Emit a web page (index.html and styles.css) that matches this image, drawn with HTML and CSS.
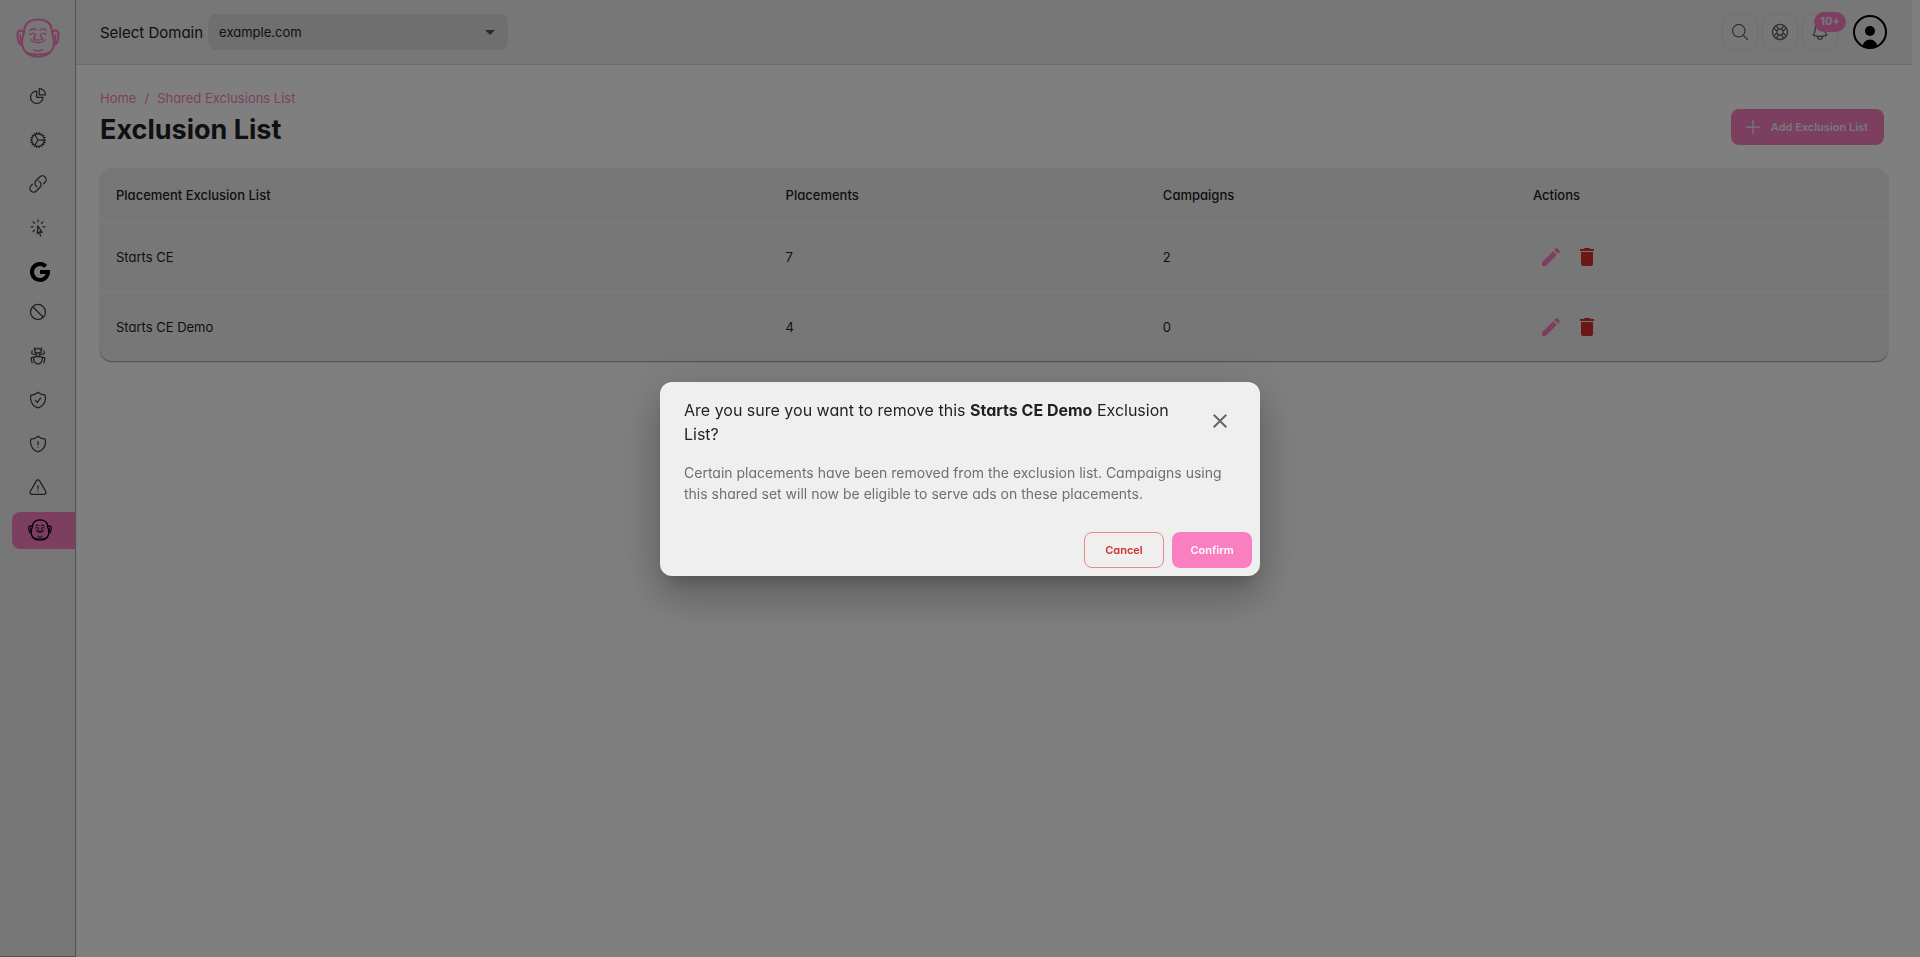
FILE: index.html
```html
<!DOCTYPE html>
<html lang="en">
<head>
<meta charset="utf-8">
<title>Exclusion List</title>
<link rel="stylesheet" href="styles.css">
</head>
<body>
<svg width="0" height="0" class="sprite" aria-hidden="true">
  <symbol id="face" viewBox="0 0 44 40" fill="none" stroke="currentColor" stroke-width="2.2" stroke-linecap="round">
    <path d="M8 14.500C8 6 13 1.500 22 1.500s14 4.500 14 13M6 24c0 9 6 14.500 16 14.500s16-5.500 16-14.500c0-4-1-6-2-9.500M6 24c0-4 1-6 2-9.500"/>
    <path d="M7.500 14C4 10.500 1 13 1.500 18c.5 4 1 8.500 4.500 8.500M36.500 14c3.500-3.500 6.500-1 6 4-.5 4-1 8.500-4.500 8.500"/>
    <path stroke-width="1.500" d="M4.500 16.500c-.8 3 1 4 .300 7M39.500 16.500c.800 3-1 4-.300 7M14 12.500c1-2 4-2.500 6-.5M24 12c2-2 5-1.500 6 .5M14 16.500c1.500-1.500 4-1.500 5.500 0M24.500 16.500c1.500-1.500 4-1.500 5.500 0M19.500 17.500c0 2-2 1.500-2 3s2 1.500 4.500 1.500 4.500 0 4.500-1.500-2-1-2-3M15 21.500c2 4 12 4 14 0M17.500 31.500c2 2 7 2 9 0M10 34c6 3 18 3 24 0"/>
  </symbol>
  <symbol id="pencil" viewBox="0 0 24 24"><path fill="currentColor" d="M3 17.250V21h3.750L17.810 9.940l-3.750-3.750L3 17.250zM20.710 7.040a1 1 0 0 0 0-1.410l-2.340-2.340a1 1 0 0 0-1.410 0l-1.830 1.830 3.750 3.750 1.830-1.830z"/></symbol>
  <symbol id="trash" viewBox="0 0 24 24"><path fill="currentColor" d="M6 19c0 1.100.9 2 2 2h8c1.100 0 2-.9 2-2V7H6v12zM19 4h-3.500l-1-1h-5l-1 1H5v2h14V4z"/></symbol>
</svg>

<div class="app">
  <aside class="sidebar">
    <a class="logo" href="#" aria-label="Home page"><svg class="logo-face"><use href="#face"/></svg></a>
    <nav aria-label="Main">
      <ul class="nav">
        <li><a href="#" aria-label="Dashboard"><svg class="ico" viewBox="0 0 24 24"><path d="M10.500 6a7.500 7.500 0 1 0 7.500 7.500h-7.500V6z"/><path d="M13.500 10.500H21A7.500 7.500 0 0 0 13.500 3v7.500z"/></svg></a></li>
        <li><a href="#" aria-label="Settings"><svg class="ico" viewBox="0 0 24 24"><path d="M4.500 12a7.500 7.500 0 0 0 15 0m-15 0a7.500 7.500 0 1 1 15 0m-15 0H3m16.500 0H21m-1.500 0H12m-8.457 3.077 1.410-.513m14.095-5.130 1.410-.513M5.106 17.785l1.150-.964m11.490-9.642 1.149-.964M7.501 19.795l.750-1.300m7.500-12.990.750-1.300m-6.063 16.658.260-1.477m2.605-14.772.260-1.477m0 17.726-.260-1.477M10.698 4.614l-.260-1.477M16.500 19.794l-.750-1.299M7.500 4.205 12 12m6.894 5.785-1.149-.964M6.256 7.178l-1.150-.964m15.352 8.864-1.410-.513M4.954 9.435l-1.410-.514M12.002 12l-3.750 6.495"/></svg></a></li>
        <li><a href="#" aria-label="Links"><svg class="ico" viewBox="0 0 24 24"><path d="M13.190 8.688a4.500 4.500 0 0 1 1.242 7.244l-4.500 4.500a4.500 4.500 0 0 1-6.364-6.364l1.757-1.757m13.350-.622 1.757-1.757a4.500 4.500 0 0 0-6.364-6.364l-4.500 4.500a4.500 4.500 0 0 0 1.242 7.244"/></svg></a></li>
        <li><a href="#" aria-label="Clicks"><svg class="ico" viewBox="0 0 24 24"><path d="M15.042 21.672 13.684 16.600m0 0-2.510 2.225.569-9.470 5.227 7.917-3.286-.672ZM12 2.250V4.500m5.834.166-1.591 1.591M20.250 10.500H18M7.757 14.743l-1.590 1.590M6 10.500H3.750m4.007-4.243-1.590-1.590"/></svg></a></li>
        <li class="google"><a href="#" aria-label="Google Ads"><svg viewBox="0 0 20 20" fill="none" stroke="#000" stroke-width="4"><path d="M15.700 4.300A8 8 0 1 0 18 10h-8"/></svg></a></li>
        <li><a href="#" aria-label="Blocked"><svg class="ico" viewBox="0 0 24 24"><path d="M18.364 18.364A9 9 0 0 0 5.636 5.636m12.728 12.728A9 9 0 0 1 5.636 5.636m12.728 12.728L5.636 5.636"/></svg></a></li>
        <li><a href="#" aria-label="Bots"><svg class="ico" viewBox="0 0 24 24"><path d="M12 12.750c1.148 0 2.278.080 3.383.237 1.037.146 1.866.966 1.866 2.013 0 3.728-2.350 6.750-5.250 6.750S6.750 18.728 6.750 15c0-1.046.830-1.867 1.866-2.013A24.204 24.204 0 0 1 12 12.750Zm0 0c2.883 0 5.647.508 8.207 1.440a23.910 23.910 0 0 1-1.152 6.060M12 12.750c-2.883 0-5.647.508-8.208 1.440.125 2.104.520 4.136 1.153 6.060M12 12.750a2.250 2.250 0 0 0 2.248-2.354M12 12.750a2.250 2.250 0 0 1-2.248-2.354M12 8.250c.995 0 1.971-.080 2.922-.236.403-.066.740-.358.795-.762a3.778 3.778 0 0 0-.399-2.250M12 8.250c-.995 0-1.970-.080-2.922-.236-.402-.066-.740-.358-.795-.762a3.734 3.734 0 0 1 .400-2.253M12 8.250a2.250 2.250 0 0 0-2.248 2.146M12 8.250a2.250 2.250 0 0 1 2.248 2.146M8.683 5a6.032 6.032 0 0 1-1.155-1.002c.070-.630.270-1.222.574-1.747m.581 2.749A3.750 3.750 0 0 1 15.318 5m0 0c.427-.283.815-.620 1.155-.999a4.471 4.471 0 0 0-.575-1.752M4.921 6a24.048 24.048 0 0 0-.392 3.314c1.668.546 3.416.914 5.223 1.082M19.080 6c.205 1.080.337 2.187.392 3.314a23.882 23.882 0 0 1-5.223 1.082"/></svg></a></li>
        <li><a href="#" aria-label="Protection"><svg class="ico" viewBox="0 0 24 24"><path d="M9 12.750 11.250 15 15 9.750m-3-7.036A11.959 11.959 0 0 1 3.598 6 11.990 11.990 0 0 0 3 9.749c0 5.592 3.824 10.290 9 11.623 5.176-1.332 9-6.030 9-11.622 0-1.310-.210-2.571-.598-3.751h-.152c-3.196 0-6.100-1.248-8.250-3.285Z"/></svg></a></li>
        <li><a href="#" aria-label="Threats"><svg class="ico" viewBox="0 0 24 24"><path d="M12 9v3.750m0 3v.008M12 2.714A11.959 11.959 0 0 1 3.598 6 11.990 11.990 0 0 0 3 9.749c0 5.592 3.824 10.290 9 11.623 5.176-1.332 9-6.030 9-11.622 0-1.310-.210-2.571-.598-3.751h-.152c-3.196 0-6.100-1.248-8.250-3.285Z"/></svg></a></li>
        <li><a href="#" aria-label="Alerts"><svg class="ico" viewBox="0 0 24 24"><path d="M12 9v3.750m-9.303 3.376c-.866 1.500.217 3.374 1.948 3.374h14.710c1.730 0 2.813-1.874 1.948-3.374L13.949 3.378c-.866-1.500-3.032-1.500-3.898 0L2.697 16.126ZM12 15.750h.007v.008H12v-.008Z"/></svg></a></li>
        <li class="active"><a href="#" aria-label="Exclusion lists" aria-current="page"><svg class="mini-face"><use href="#face"/></svg></a></li>
      </ul>
    </nav>
  </aside>

  <div class="page">
    <header class="topbar">
      <div class="domain">
        <label for="domain">Select Domain</label>
        <span class="select"><select id="domain"><option>example.com</option></select><svg viewBox="0 0 24 24" aria-hidden="true"><path fill="currentColor" d="M7 10l5 5 5-5z"/></svg></span>
      </div>
      <div class="tools">
        <button type="button" aria-label="Search"><svg class="ico" viewBox="0 0 24 24"><path d="m21 21-5.197-5.197m0 0A7.500 7.500 0 1 0 5.196 5.196a7.500 7.500 0 0 0 10.607 10.607Z"/></svg></button>
        <button type="button" aria-label="Help"><svg class="ico" viewBox="0 0 24 24"><path d="M16.712 4.330a9.027 9.027 0 0 1 1.652 1.306c.510.510.944 1.064 1.306 1.652M16.712 4.330l-3.448 4.138m3.448-4.138a9.014 9.014 0 0 0-9.424 0M19.670 7.288l-4.138 3.448m4.138-3.448a9.014 9.014 0 0 1 0 9.424m-4.138-5.976a3.736 3.736 0 0 0-.880-1.388 3.737 3.737 0 0 0-1.388-.880m2.268 2.268a3.765 3.765 0 0 1 0 2.528m-2.268-4.796a3.765 3.765 0 0 0-2.528 0m4.796 4.796c-.181.506-.475.982-.880 1.388a3.736 3.736 0 0 1-1.388.880m2.268-2.268 4.138 3.448m0 0a9.027 9.027 0 0 1-1.306 1.652c-.510.510-1.064.944-1.652 1.306m0 0-3.448-4.138m3.448 4.138a9.014 9.014 0 0 1-9.424 0m5.976-4.138a3.765 3.765 0 0 1-2.528 0m0 0a3.736 3.736 0 0 1-1.388-.880 3.737 3.737 0 0 1-.880-1.388m2.268 2.268L7.288 19.670m0 0a9.024 9.024 0 0 1-1.652-1.306 9.027 9.027 0 0 1-1.306-1.652m0 0 4.138-3.448M4.330 16.712a9.014 9.014 0 0 1 0-9.424m4.138 5.976a3.765 3.765 0 0 1 0-2.528m0 0c.181-.506.475-.982.880-1.388a3.736 3.736 0 0 1 1.388-.880m-2.268 2.268L4.330 7.288m6.406 1.180L7.288 4.330m0 0a9.024 9.024 0 0 0-1.652 1.306A9.025 9.025 0 0 0 4.330 7.288"/></svg></button>
        <button type="button" aria-label="Notifications"><svg class="ico" viewBox="0 0 24 24"><path d="M14.857 17.082a23.848 23.848 0 0 0 5.454-1.310A8.967 8.967 0 0 1 18 9.750V9A6 6 0 0 0 6 9v.750a8.967 8.967 0 0 1-2.312 6.022c1.733.640 3.560 1.085 5.455 1.310m5.714 0a24.255 24.255 0 0 1-5.714 0m5.714 0a3 3 0 1 1-5.714 0"/></svg><span class="badge">10+</span></button>
        <button type="button" class="avatar" aria-label="Account"><svg viewBox="0 0 34 34"><clipPath id="disc"><circle cx="17" cy="17" r="16"/></clipPath><circle cx="17" cy="17" r="16" fill="none" stroke="#000" stroke-width="2"/><circle cx="17" cy="16" r="5"/><circle cx="17" cy="32" r="7.500" clip-path="url(#disc)"/></svg></button>
      </div>
    </header>

    <main class="content">
      <div class="heading">
        <div>
          <nav class="crumbs" aria-label="Breadcrumb"><a href="#">Home</a><span>/</span><a href="#">Shared Exclusions List</a></nav>
          <h1>Exclusion List</h1>
        </div>
        <button type="button" class="btn primary add"><svg class="ico" viewBox="0 0 24 24"><path d="M12 4v16m8-8H4"/></svg>Add Exclusion List</button>
      </div>
      <div class="card">
        <table>
          <colgroup><col class="c-name"><col class="c-place"><col class="c-camp"><col></colgroup>
          <thead><tr><th>Placement Exclusion List</th><th>Placements</th><th>Campaigns</th><th>Actions</th></tr></thead>
          <tbody>
            <tr><td>Starts CE</td><td>7</td><td>2</td><td><div class="actions"><button type="button" class="edit" aria-label="Edit Starts CE"><svg><use href="#pencil"/></svg></button><button type="button" class="del" aria-label="Delete Starts CE"><svg><use href="#trash"/></svg></button></div></td></tr>
            <tr><td>Starts CE Demo</td><td>4</td><td>0</td><td><div class="actions"><button type="button" class="edit" aria-label="Edit Starts CE Demo"><svg><use href="#pencil"/></svg></button><button type="button" class="del" aria-label="Delete Starts CE Demo"><svg><use href="#trash"/></svg></button></div></td></tr>
          </tbody>
        </table>
      </div>
    </main>
  </div>
</div>

<div class="backdrop">
  <section class="dialog" role="dialog" aria-modal="true" aria-labelledby="dlg-title">
    <div class="dialog-head">
      <h2 id="dlg-title">Are you sure you want to remove this <strong>Starts CE Demo</strong> Exclusion List?</h2>
      <button type="button" class="close" aria-label="Close"><svg viewBox="0 0 24 24"><path fill="currentColor" d="M19 6.410 17.590 5 12 10.590 6.410 5 5 6.410 10.590 12 5 17.590 6.410 19 12 13.410 17.590 19 19 17.590 13.410 12z"/></svg></button>
    </div>
    <p>Certain placements have been removed from the exclusion list. Campaigns using this shared set will now be eligible to serve ads on these placements.</p>
    <div class="dialog-actions">
      <button type="button" class="btn outline">Cancel</button>
      <button type="button" class="btn primary">Confirm</button>
    </div>
  </section>
</div>
</body>
</html>
```
FILE: styles.css
```css
* { box-sizing: border-box; }
:root { --pink: #fa7fc1; --surface: #efefef; --ink: #1f2023; }
body {
  margin: 0;
  background: #fff;
  color: var(--ink);
  font-family: Inter, "Liberation Sans", sans-serif;
  font-feature-settings: "cv11";
  font-size: 14px;
}
button, select { font: inherit; font-feature-settings: inherit; color: inherit; }
button { border: 0; padding: 0; background: none; cursor: pointer; display: flex; align-items: center; justify-content: center; }
a { color: inherit; text-decoration: none; }
h1, h2, p { margin: 0; }
svg { display: block; flex: none; }
.sprite { position: absolute; }
.ico { width: 20px; height: 20px; fill: none; stroke: currentColor; stroke-width: 1.5; stroke-linecap: round; stroke-linejoin: round; }

.app { display: flex; min-height: 100vh; padding-right: 8px; }
.sidebar {
  flex: none;
  width: 76px;
  background: var(--surface);
  border-right: 1px solid #a8a8a8;
  border-bottom: 1px solid #a8a8a8;
  box-shadow: 0 1px 3px rgba(0, 0, 0, .12);
  color: #3c3c3c;
}
.logo { display: flex; justify-content: center; height: 74px; padding-top: 18px; color: var(--pink); }
.logo-face { width: 44px; height: 40px; }
.nav { list-style: none; margin: 0; padding: 0; }
.nav li { height: 44px; display: flex; align-items: center; }
.nav a { flex: 1; display: flex; justify-content: center; }
.nav .google { height: 40px; padding: 4px 0 0 4px; }
.google svg { width: 20px; height: 20px; }
.nav .active { padding: 0 0 4px 12px; }
.active a { height: 37px; padding-right: 8px; align-items: center; background: var(--pink); border-radius: 8px 0 0 8px; color: #000; }
.mini-face { width: 24px; height: 22px; }

.page { flex: 1; min-width: 0; }
.topbar {
  height: 65px;
  padding: 0 24px;
  display: flex;
  align-items: center;
  justify-content: space-between;
  background: var(--surface);
  border-bottom: 1px solid #d8d8d8;
}
.domain { display: flex; align-items: center; gap: 5px; }
.domain label { font-size: 15px; }
.select { display: flex; align-items: center; width: 300px; height: 36px; border-radius: 8px; background: #dfdfdf; font-size: 13px; }
.select select { appearance: none; flex: 1; height: 36px; margin-right: -32px; padding: 0 32px 0 11px; border: 0; background: none; }
.select svg { width: 24px; height: 24px; margin-right: 6px; color: #555; pointer-events: none; }
.tools { display: flex; align-items: center; gap: 4px; color: #606060; }
.tools button { position: relative; width: 36px; height: 36px; border: 1px solid #e0e0e0; border-radius: 8px; }
.badge {
  position: absolute; top: -3px; right: -9px;
  height: 20px; padding: 0 6px; border-radius: 10px;
  background: var(--pink); color: var(--surface);
  font-size: 11px; line-height: 19px; font-weight: 700;
}
.tools .avatar { width: 34px; height: 34px; border: 0; margin-left: 11px; margin-right: 1px; }
.avatar svg { width: 34px; height: 34px; fill: #000; }

.content { padding: 23px 24px; }
.heading { display: flex; justify-content: space-between; align-items: flex-end; margin-bottom: 20px; padding-right: 4px; }
.crumbs { display: flex; gap: 8px; color: var(--pink); font-size: 13px; line-height: 20px; }
h1 { font-size: 27px; line-height: 36px; font-weight: 700; margin-top: 4px; }
.btn { height: 36px; border-radius: 8px; font-size: 11px; font-weight: 600; min-width: 80px; }
.primary { background: var(--pink); color: #fff; }
.add { margin-bottom: 3px; padding: 0 16px 0 12px; gap: 8px; color: var(--surface); }

.card { border-radius: 12px; background: var(--surface); box-shadow: 0 1px 1px rgba(0, 0, 0, .35), 0 1px 3px rgba(0, 0, 0, .1); overflow: hidden; }
table { width: 100%; border-collapse: separate; border-spacing: 0; table-layout: fixed; }
.c-name { width: 37.45%; }
.c-place { width: 21.1%; }
.c-camp { width: 20.7%; }
th, td { padding: 0 16px; text-align: left; font-size: 13px; border-bottom: 1px solid #f9f9f9; }
th { height: 55px; font-weight: 500; }
td { height: 69px; }
tr:last-child td { border-bottom: 0; }
.actions { display: flex; gap: 12px; padding-left: 6px; }
.actions svg { width: 24px; height: 24px; }
.edit { color: var(--pink); }
.del { color: #d32f2f; }
thead tr:last-child th { border-bottom: 1px solid #f9f9f9; }

.backdrop { position: fixed; inset: 0; display: flex; align-items: center; justify-content: center; background: rgba(0, 0, 0, .5); }
.dialog {
  width: 600px; max-width: 90%;
  border-radius: 12px;
  background: var(--surface);
  box-shadow: 0 11px 15px -7px rgba(0, 0, 0, .2), 0 24px 38px 3px rgba(0, 0, 0, .14), 0 9px 46px 8px rgba(0, 0, 0, .12);
}
.dialog-head { display: flex; gap: 24px; padding: 16px 28px 16px 24px; }
.dialog-head h2 { flex: 1; font-size: 16px; line-height: 24px; font-weight: 400; }
.dialog-head strong { font-weight: 700; }
.close { width: 24px; height: 46px; color: #666; }
.close svg { width: 24px; height: 24px; }
.dialog p { padding: 0 24px; line-height: 21px; color: #6c6f75; }
.dialog-actions { display: flex; justify-content: flex-end; gap: 8px; padding: 28px 8px 8px; }
.outline { border: 1px solid #e58a8a; color: #d32f2f; }
```
